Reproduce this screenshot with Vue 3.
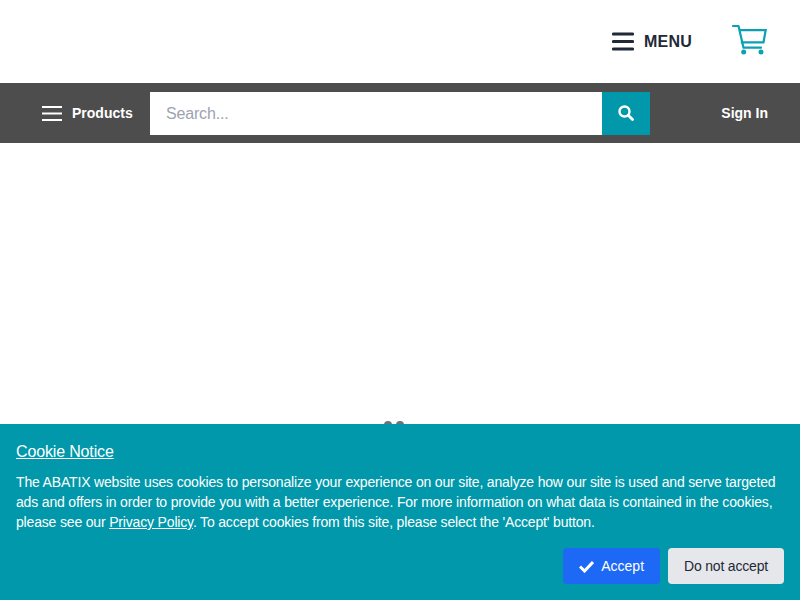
<template>
  <div class="page">
    <header class="top">
      <a class="menu">
        <svg class="burger" width="22" height="19" viewBox="0 0 22 19"><path d="M1.500 2h19M1.500 9.500h19M1.500 17h19" fill="none" stroke="#1f2937" stroke-width="3.200" stroke-linecap="round"/></svg>
        <span>MENU</span>
      </a>
      <svg class="cart" width="36" height="32" viewBox="0 0 36 32" fill="none" stroke="#0ba0b4" stroke-width="2.200">
        <path d="M1 2h5.500l5 21.700h17.500" stroke-linecap="round" stroke-linejoin="round"/>
        <path d="M7 6.200h26.700l-2.200 12.100h-22.700"/>
        <circle cx="11.700" cy="28" r="2.500" fill="#0ba0b4" stroke="none"/>
        <circle cx="29" cy="28" r="2.500" fill="#0ba0b4" stroke="none"/>
      </svg>
    </header>
    <nav class="bar">
      <a class="products">
        <svg width="20" height="15" viewBox="0 0 20 15"><path d="M0 1h20M0 7.500h20M0 14h20" stroke="#fff" stroke-width="2"/></svg>
        <span>Products</span>
      </a>
      <div class="search">
        <span class="placeholder">Search...</span>
        <button class="go">
          <svg width="16" height="16" viewBox="0 0 16 16" fill="none" stroke="#fff"><circle cx="6.500" cy="6.500" r="5" stroke-width="2.400"/><path d="M10.500 10.500l4 4" stroke-width="2.800" stroke-linecap="round"/></svg>
        </button>
      </div>
      <a class="signin">Sign In</a>
    </nav>
    <div class="spinner"><i></i><i></i></div>
    <section class="cookie">
      <a class="title">Cookie Notice</a>
      <p>The ABATIX website uses cookies to personalize your experience on our site, analyze how our site is used and serve targeted ads and offers in order to provide you with a better experience. For more information on what data is contained in the cookies, please see our <a>Privacy Policy</a>. To accept cookies from this site, please select the 'Accept' button.</p>
      <div class="actions">
        <button class="accept">
          <svg width="15" height="13" viewBox="0 0 15 13"><path d="M1 6.500l4.500 4.500 8.500-9" fill="none" stroke="#fff" stroke-width="3"/></svg>
          Accept
        </button>
        <button class="decline">Do not accept</button>
      </div>
    </section>
  </div>
</template>

<script setup>
</script>

<style>
html, body { margin: 0; background: #fff; }
</style>

<style scoped>
.page { position: relative; width: 800px; height: 600px; overflow: hidden; font-family: "Liberation Sans", Arial, sans-serif; }
.top { height: 83px; box-sizing: border-box; display: flex; align-items: flex-start; justify-content: flex-end; padding: 24px 32px 0 0; }
.menu { display: flex; align-items: center; gap: 10px; margin: 8px 40px 0 0; font-weight: 700; font-size: 16px; letter-spacing: 0.2px; color: #1f2937; line-height: 19px; }
.bar { height: 60px; background: #4d4d4d; display: flex; align-items: center; color: #fff; font-weight: 700; font-size: 14px; }
.products { display: flex; align-items: center; gap: 10px; margin-left: 42px; width: 108px; }
.search { display: flex; align-items: center; width: 500px; height: 43px; background: #fff; box-sizing: border-box; padding-left: 16px; justify-content: space-between; }
.placeholder { font-weight: 400; font-size: 16px; letter-spacing: -0.17px; color: #9ca3af; padding-top: 1px; }
.go { width: 48px; height: 43px; border: 0; padding: 0; background: #0098aa; display: flex; align-items: center; justify-content: center; }
.signin { margin-left: auto; margin-right: 32px; }
.spinner { position: absolute; left: 384px; top: 421px; display: flex; gap: 4px; }
.spinner i { width: 8px; height: 8px; border-radius: 50%; background: #6b7280; }
.cookie { position: absolute; left: 0; right: 0; bottom: 0; height: 176px; box-sizing: border-box; background: #0098aa; color: #fff; padding: 18px 16px 0; font-size: 14px; letter-spacing: -0.17px; line-height: 20px; }
.title { display: block; font-size: 16px; letter-spacing: -0.15px; line-height: 20px; text-decoration: underline; }
.cookie p { margin: 10px 0 0; }
.cookie p a { text-decoration: underline; }
.actions { display: flex; justify-content: flex-end; gap: 8px; margin-top: 16px; }
.actions button { height: 36px; border: 0; border-radius: 4px; font-family: "Liberation Sans", Arial, sans-serif; font-size: 14px; padding: 0 16px; display: flex; align-items: center; }
.actions .accept { background: #1d68f5; color: #fff; gap: 7px; letter-spacing: 0; }
.actions .decline { background: #e5e7eb; color: #1f2937; letter-spacing: -0.186px; }
</style>
